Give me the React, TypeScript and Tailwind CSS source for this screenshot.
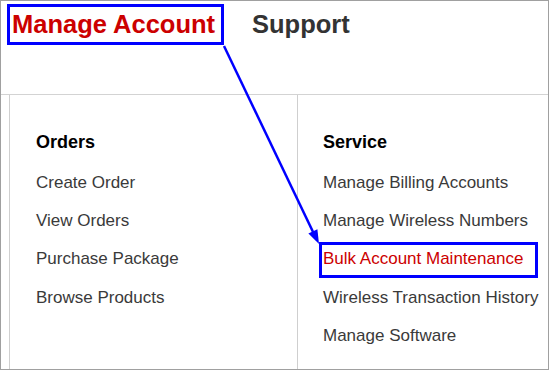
import React from 'react';

const orders = ['Create Order', 'View Orders', 'Purchase Package', 'Browse Products'];
const service = [
  'Manage Billing Accounts',
  'Manage Wireless Numbers',
  'Bulk Account Maintenance',
  'Wireless Transaction History',
  'Manage Software',
];

function Column({ title, items, className }: { title: string; items: string[]; className: string }) {
  return (
    <div className={`flex flex-col border-l border-[#cfcfcf] pt-[35px] ${className}`}>
      <h3 className="text-[18px] leading-[24px] font-bold text-black mb-[9.8px]">{title}</h3>
      {items.map((item) => (
        <a
          key={item}
          className={`block text-[17px] leading-[38.25px] whitespace-nowrap ${
            item === 'Bulk Account Maintenance' ? 'text-[#cc0000]' : 'text-[#3a3a3a]'
          }`}
        >
          {item}
        </a>
      ))}
    </div>
  );
}

export default function App() {
  return (
    <div className="relative w-[549px] h-[370px] overflow-hidden bg-white border border-[#a0a0a0] flex flex-col font-['Liberation_Sans',Arial,sans-serif]">
      {/* Top tabs */}
      <div className="h-[94px] shrink-0 border-b border-[#d3d3d3] flex items-start pt-[3px] pl-[6px]">
        <div className="w-[217px] h-[41px] border-[3px] border-[#0000ff] pt-[3.5px] pl-[2px]">
          <span className="block text-[25.5px] leading-[26px] font-bold text-[#cc0000] whitespace-nowrap">Manage Account</span>
        </div>
        <div className="ml-[28px] mt-[6.5px] text-[25.5px] leading-[26px] font-bold text-[#333333]">Support</div>
      </div>

      {/* Menu columns */}
      <div className="flex flex-1 pl-[8px]">
        <Column title="Orders" items={orders} className="w-[288px] pl-[26px]" />
        <Column title="Service" items={service} className="flex-1 pl-[25px]" />
      </div>

      {/* Annotation: highlight box + arrow */}
      <div className="absolute left-[318px] top-[241px] w-[219px] h-[36px] border-[3px] border-[#0000ff] pointer-events-none" />
      <svg className="absolute left-0 top-0 pointer-events-none" width="549" height="370" viewBox="0 0 549 370">
        <line x1="223" y1="45" x2="313" y2="233" stroke="#0000ff" strokeWidth="2.5" />
        <polygon points="318,243 307.4,232.5 316.4,228.2" fill="#0000ff" />
      </svg>
    </div>
  );
}
